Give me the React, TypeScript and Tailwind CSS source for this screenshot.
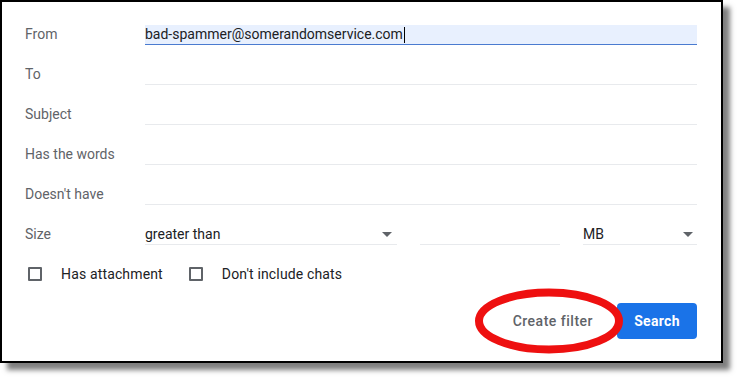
import React from "react";

const Arrow = () => (
  <svg width="10" height="5" viewBox="0 0 10 5" className="shrink-0">
    <path d="M0 0 L10 0 L5 5 Z" fill="#5f6368" />
  </svg>
);

const Row = ({ label, children }: { label: string; children?: React.ReactNode }) => (
  <div className="flex h-10 items-center">
    <div className="w-[120px] shrink-0 text-[14px] text-[#5f6368]">{label}</div>
    <div className="flex-1">{children}</div>
  </div>
);

const Field = () => <div className="mt-[2px] h-[20px] border-b border-[#e8eaed]" />;

const Checkbox = () => (
  <div className="h-[14px] w-[14px] rounded-[1px] border-2 border-[#5f6368]" />
);

export default function App() {
  return (
    <div className="h-[377px] w-[737px] bg-white" style={{ fontFamily: "Roboto, 'Liberation Sans', sans-serif" }}>
      <div className="relative h-[363px] w-[723px] border-2 border-black bg-white pl-[23px] pr-[24px] pt-[12px] shadow-[7px_7px_5px_rgba(0,0,0,0.5)]">
        <Row label="From">
          <div className="mt-[2px] flex h-[20px] items-center border-b border-[#4a7bd0] bg-[#e8f0fe] text-[14px] text-[#202124]">
            <span>bad-spammer@somerandomservice.com</span>
            <span className="ml-[1px] h-[16px] w-[1px] bg-black" />
          </div>
        </Row>
        <Row label="To">
          <Field />
        </Row>
        <Row label="Subject">
          <Field />
        </Row>
        <Row label="Has the words">
          <Field />
        </Row>
        <Row label="Doesn't have">
          <Field />
        </Row>
        <Row label="Size">
          <div className="flex items-center">
            <div className="mt-[2px] flex h-[20px] w-[252px] items-center justify-between border-b border-[#e8eaed] pr-[5px] text-[14px] text-[#202124]">
              <span>greater than</span>
              <Arrow />
            </div>
            <div className="ml-[23px] mt-[2px] h-[20px] w-[140px] border-b border-[#e8eaed]" />
            <div className="ml-[23px] mt-[2px] flex h-[20px] flex-1 items-center justify-between border-b border-[#e8eaed] pr-[4px] text-[14px] text-[#202124]">
              <span>MB</span>
              <Arrow />
            </div>
          </div>
        </Row>
        <div className="flex h-10 items-center text-[14px] tracking-[0.15px] text-[#202124]">
          <div className="ml-[3px]">
            <Checkbox />
          </div>
          <span className="ml-[19px]">Has attachment</span>
          <div className="ml-[26px]">
            <Checkbox />
          </div>
          <span className="ml-[19px]">Don't include chats</span>
        </div>
        <div className="mt-[9px] flex justify-end">
          <button className="h-[36px] px-[24px] text-[14px] font-medium tracking-[0.5px] text-[#5f6368]">Create filter</button>
          <button className="h-[36px] w-[80px] rounded-[4px] bg-[#1a73e8] text-[14px] font-bold tracking-[0.3px] text-white">Search</button>
        </div>
        <svg className="pointer-events-none absolute left-[471px] top-[286px]" width="156" height="66" viewBox="0 0 156 66">
          <ellipse cx="76" cy="33" rx="70" ry="28.5" fill="none" stroke="#ee1010" strokeWidth="8" />
        </svg>
      </div>
    </div>
  );
}
